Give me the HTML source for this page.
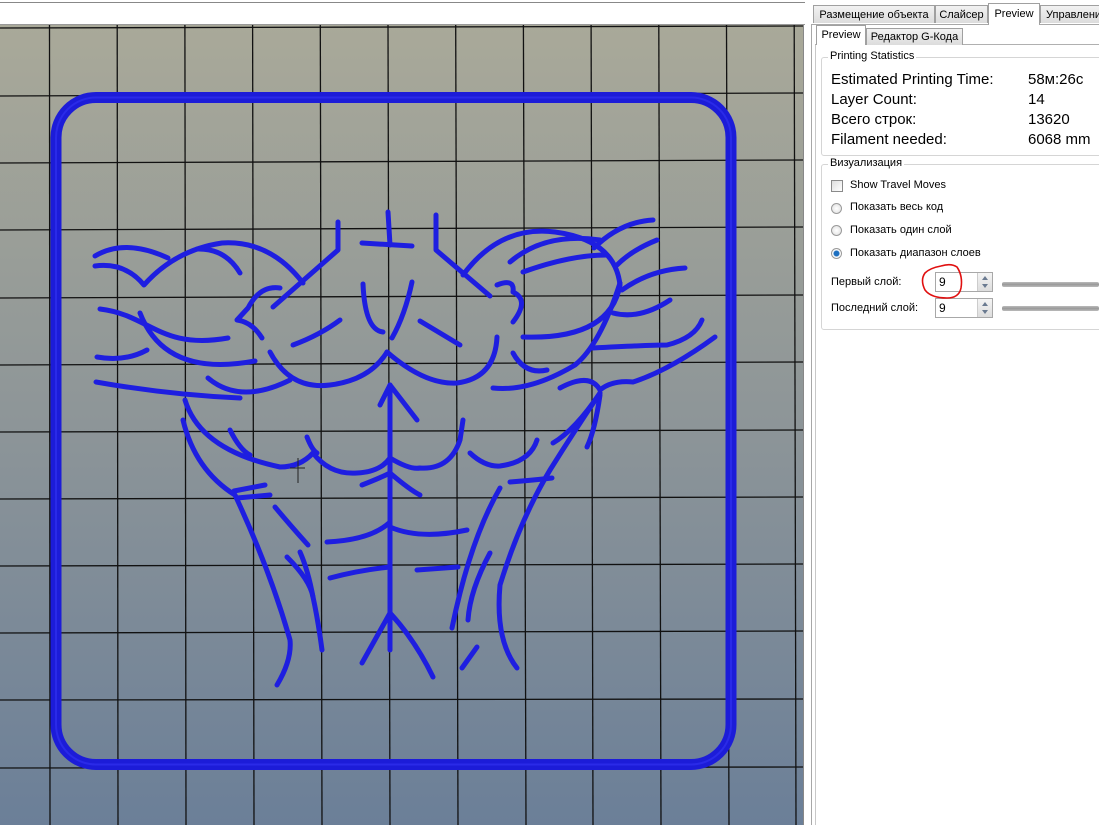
<!DOCTYPE html>
<html><head><meta charset="utf-8"><style>
body{margin:0;width:1099px;height:825px;overflow:hidden;background:#fff;position:relative;font-family:"Liberation Sans","DejaVu Sans",sans-serif;}
.abs{position:absolute}
.t{font-size:11px;color:#000;white-space:nowrap}
.tab{position:absolute;top:5px;height:18px;border:1px solid #a0a0a0;border-bottom:none;background:linear-gradient(#f2f2f2,#dcdcdc);font-size:11px;line-height:18px;text-align:center;box-sizing:border-box;white-space:nowrap;overflow:hidden}
.big{font-size:15px;position:absolute;white-space:nowrap}
.radio{position:absolute;width:11px;height:11px;border-radius:50%;border:1px solid #9a9a9a;background:radial-gradient(#fff,#ddd);box-sizing:border-box}
.inp{position:absolute;width:58px;height:20px;border:1px solid #a8a8a8;box-sizing:border-box;background:#fff;font-size:12px;line-height:18px;padding-left:3px}
.spin{position:absolute;right:0;top:0;width:14px;height:18px;border-left:1px solid #ccc;background:linear-gradient(#f4f4f4,#ddd)}
.spin:before{content:"";position:absolute;left:4px;top:3px;border:3px solid transparent;border-bottom:4px solid #6a7a90;border-top:none}
.spin:after{content:"";position:absolute;left:4px;top:11px;border:3px solid transparent;border-top:4px solid #6a7a90;border-bottom:none}
.slider{position:absolute;left:1002px;width:97px;height:5px;background:linear-gradient(#bbb,#999,#bbb);border-radius:2px}
</style></head><body>
<div class="abs" style="left:0;top:2px;width:805px;height:1px;background:#888"></div>
<div class="abs" style="left:0;top:24px;width:805px;height:1px;background:#999"></div>
<svg class="abs" style="left:0;top:25px" width="804" height="800" viewBox="0 25 804 800">
<defs><linearGradient id="g" x1="0" y1="0" x2="0" y2="1"><stop offset="0" stop-color="#a9a999"/><stop offset="0.5" stop-color="#8d9598"/><stop offset="1" stop-color="#6b7f98"/></linearGradient></defs>
<rect x="0" y="25" width="803" height="800" fill="url(#g)"/>
<rect x="803" y="25" width="1" height="800" fill="#888"/>
<g stroke="#111" stroke-width="1.3">
<line x1="49.5" y1="25" x2="50" y2="825"/><line x1="117.2" y1="25" x2="118" y2="825"/><line x1="184.9" y1="25" x2="186" y2="825"/><line x1="252.6" y1="25" x2="254" y2="825"/><line x1="320.3" y1="25" x2="322" y2="825"/><line x1="388" y1="25" x2="390" y2="825"/><line x1="455.7" y1="25" x2="458" y2="825"/><line x1="523.4" y1="25" x2="526" y2="825"/><line x1="591.1" y1="25" x2="593" y2="825"/><line x1="658.8" y1="25" x2="661" y2="825"/><line x1="726.5" y1="25" x2="729" y2="825"/><line x1="794.2" y1="25" x2="796" y2="825"/>
<line x1="0" y1="28" x2="803" y2="26"/><line x1="0" y1="96" x2="803" y2="93"/><line x1="0" y1="163" x2="803" y2="160"/><line x1="0" y1="230" x2="803" y2="227"/><line x1="0" y1="298" x2="803" y2="295"/><line x1="0" y1="365" x2="803" y2="362"/><line x1="0" y1="432" x2="803" y2="430"/><line x1="0" y1="499" x2="803" y2="497"/><line x1="0" y1="566" x2="803" y2="564"/><line x1="0" y1="633" x2="803" y2="631"/><line x1="0" y1="700" x2="803" y2="699"/><line x1="0" y1="768" x2="803" y2="767"/>
</g>
<rect x="56" y="97.5" width="675" height="667" rx="40" fill="none" stroke="#1c1cd8" stroke-width="11"/>
<rect x="56" y="97.5" width="675" height="667" rx="40" fill="none" stroke="#2a2ae8" stroke-width="2"/>
<g fill="none" stroke="#1e1ee0" stroke-width="5" stroke-linecap="round" stroke-linejoin="round">
<path d="M95,256 Q125,238 168,258"/>
<path d="M95,266 Q125,262 144,285 Q175,250 222,243 Q270,240 303,283"/>
<path d="M197,249 Q225,248 240,273"/>
<path d="M338,222 L338,250 L273,307"/>
<path d="M280,288 Q260,285 248,308 L237,320 Q252,322 262,338"/>
<path d="M100,309 C150,315 160,350 228,338"/>
<path d="M140,313 Q165,378 255,361"/>
<path d="M97,357 Q125,362 147,350"/>
<path d="M96,382 Q170,395 240,398"/>
<path d="M208,378 Q240,405 290,380"/>
<path d="M270,352 Q290,390 330,385 Q370,380 387,352"/>
<path d="M293,345 Q320,335 340,320"/>
<path d="M363,284 Q365,330 383,332"/>
<path d="M388,212 L390,245"/><path d="M362,243 L412,246"/>
<path d="M392,338 Q405,315 412,282"/>
<path d="M436,215 L436,250 L490,296"/>
<path d="M463,275 Q500,225 555,232 Q615,240 620,285 Q610,340 523,337"/>
<path d="M497,285 Q515,278 513,292 Q530,300 513,322"/>
<path d="M510,262 Q545,232 600,240"/>
<path d="M523,272 Q570,255 607,255"/>
<path d="M594,248 Q620,222 653,220"/>
<path d="M617,265 Q632,250 657,240"/>
<path d="M622,290 Q650,270 685,268"/>
<path d="M613,313 Q640,320 670,300"/>
<path d="M593,348 Q650,345 667,345 Q695,338 702,320"/>
<path d="M620,283 Q600,345 575,365 Q530,392 493,388"/>
<path d="M513,353 Q525,375 547,370"/>
<path d="M387,352 Q425,385 457,383 Q495,378 497,337"/>
<path d="M420,321 L460,345"/>
<path d="M560,388 Q590,372 600,390 Q612,380 633,382 Q670,370 715,337"/>
<path d="M600,393 Q575,430 553,443"/>
<path d="M600,395 Q595,430 587,447"/>
<path d="M390,385 L390,650"/>
<path d="M380,405 L390,385 L417,420"/>
<path d="M185,400 Q200,450 280,467 Q300,467 313,453 Q330,475 357,473 Q380,472 390,458 Q410,470 420,468 Q450,470 460,440 L463,420"/>
<path d="M230,430 Q240,450 250,455"/>
<path d="M307,437 Q312,450 317,453"/>
<path d="M470,453 Q485,467 500,466 Q530,462 537,440"/>
<path d="M183,420 Q195,470 235,495 Q270,570 290,640 Q292,660 277,685"/>
<path d="M234,491 L265,485"/><path d="M237,498 L270,495"/>
<path d="M275,507 Q290,525 308,545"/>
<path d="M287,557 Q310,580 313,597 Q318,620 322,650"/><path d="M300,552 Q308,570 313,597"/>
<path d="M327,542 Q370,540 389,523"/>
<path d="M390,527 Q420,540 467,530"/>
<path d="M330,578 Q360,570 390,567"/>
<path d="M417,570 L458,567"/>
<path d="M362,485 Q380,478 390,473 Q410,490 420,495"/>
<path d="M362,663 L390,613 Q415,640 433,677"/>
<path d="M500,488 Q470,540 452,628"/>
<path d="M490,553 Q470,590 468,620"/>
<path d="M477,647 L462,668"/>
<path d="M600,393 Q575,430 550,470 Q520,520 500,585 Q495,640 517,668"/>
<path d="M510,482 Q535,480 552,478"/>
</g>
<path d="M290,468 L305,468 M298,458 L298,483" stroke="#222" stroke-width="1"/>
</svg>
<div class="abs" style="left:811px;top:24px;width:1px;height:801px;background:#a8a8a8"></div>
<div class="abs" style="left:815px;top:44px;width:1px;height:781px;background:#c8c8c8"></div>
<div class="abs" style="left:811px;top:24px;width:288px;height:1px;background:#a8a8a8"></div>
<div class="tab" style="left:813px;width:122px">Размещение объекта</div>
<div class="tab" style="left:935px;width:53px">Слайсер</div>
<div class="tab" style="left:988px;width:52px;top:3px;height:22px;background:#fff;line-height:20px">Preview</div>
<div class="tab" style="left:1040px;width:70px;text-align:left;padding-left:5px">Управлени</div>
<div class="abs" style="left:815px;top:44px;width:284px;height:1px;background:#b0b0b0"></div>
<div class="tab" style="left:816px;top:25px;width:50px;height:20px;background:#fff;line-height:19px">Preview</div>
<div class="tab" style="left:866px;top:28px;width:97px;height:17px;line-height:16px">Редактор G-Кода</div>
<div class="abs" style="left:821px;top:57px;width:290px;height:97px;border:1px solid #d5d5d5;border-radius:3px"></div>
<div class="abs t" style="left:828px;top:50px;background:#fff;padding:0 2px">Printing Statistics</div>
<div class="big" style="left:831px;top:71px">Estimated Printing Time:</div><div class="big" style="left:1028px;top:71px">58м:26с</div>
<div class="big" style="left:831px;top:91px">Layer Count:</div><div class="big" style="left:1028px;top:91px">14</div>
<div class="big" style="left:831px;top:111px">Всего строк:</div><div class="big" style="left:1028px;top:111px">13620</div>
<div class="big" style="left:831px;top:131px">Filament needed:</div><div class="big" style="left:1028px;top:131px">6068 mm</div>
<div class="abs" style="left:821px;top:164px;width:290px;height:164px;border:1px solid #d5d5d5;border-radius:3px"></div>
<div class="abs t" style="left:828px;top:157px;background:#fff;padding:0 2px">Визуализация</div>
<div class="abs" style="left:831px;top:180px;width:12px;height:12px;border:1px solid #8a8a8a;box-sizing:border-box;background:linear-gradient(135deg,#ddd,#fff)"></div>
<div class="abs t" style="left:850px;top:179px">Show Travel Moves</div>
<div class="radio" style="left:831px;top:203px"></div><div class="abs t" style="left:850px;top:201px">Показать весь код</div>
<div class="radio" style="left:831px;top:225px"></div><div class="abs t" style="left:850px;top:224px">Показать один слой</div>
<div class="radio" style="left:831px;top:248px;background:radial-gradient(#1d6fc0 0,#1d6fc0 2.5px,#fff 3.5px,#ddd)"></div><div class="abs t" style="left:850px;top:247px">Показать диапазон слоев</div>
<div class="abs t" style="left:831px;top:276px">Первый слой:</div>
<div class="inp" style="left:935px;top:272px">9<div class="spin"></div></div>
<div class="slider" style="top:282px"></div>
<div class="abs t" style="left:831px;top:302px">Последний слой:</div>
<div class="inp" style="left:935px;top:298px">9<div class="spin"></div></div>
<div class="slider" style="top:306px"></div>
<svg class="abs" style="left:915px;top:260px" width="56" height="44"><path d="M26,6 Q36,3 42,7 Q48,16 46,28 Q44,38 32,38 Q16,38 10,30 Q5,20 10,13 Q15,8 26,6" fill="none" stroke="#e01010" stroke-width="1.6"/></svg>
</body></html>
